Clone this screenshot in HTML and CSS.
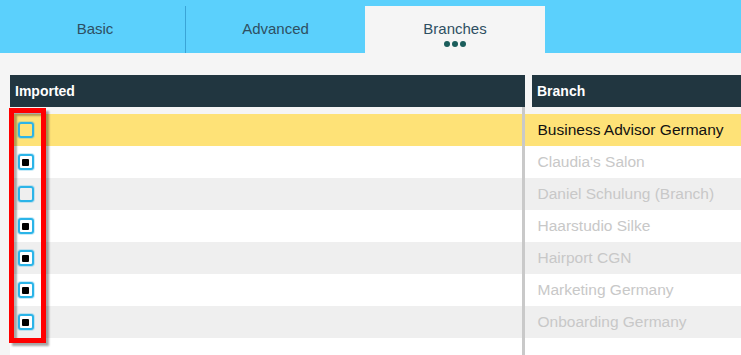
FILE: index.html
```html
<!DOCTYPE html>
<html lang="en">
<head>
    <meta charset="UTF-8">
    <title>Branches</title>
    <link rel="stylesheet" href="styles.css">
</head>
<body>
    <div class="tabs">
        <div class="tab">Basic</div>
        <div class="tab tab-sep">Advanced</div>
        <div class="tab active">
            Branches
            <div class="dots"><span></span><span></span><span></span></div>
        </div>
    </div>

    <div class="tables">
        <div class="heads">
            <div class="head head-left">Imported</div>
            <div class="head head-right">Branch</div>
        </div>
        <div class="body">
            <div class="col col-left">
                <div class="row selected"><span class="check"></span></div>
                <div class="row"><span class="check on"></span></div>
                <div class="row"><span class="check"></span></div>
                <div class="row"><span class="check on"></span></div>
                <div class="row"><span class="check on"></span></div>
                <div class="row"><span class="check on"></span></div>
                <div class="row"><span class="check on"></span></div>
                <div class="row tail"></div>
            </div>
            <div class="col col-right">
                <div class="row selected">Business Advisor Germany</div>
                <div class="row">Claudia's Salon</div>
                <div class="row">Daniel Schulung (Branch)</div>
                <div class="row">Haarstudio Silke</div>
                <div class="row">Hairport CGN</div>
                <div class="row">Marketing Germany</div>
                <div class="row">Onboarding Germany</div>
                <div class="row tail"></div>
            </div>
        </div>
        <!-- annotation frame round the checkboxes -->
        <div class="marker"></div>
    </div>
</body>
</html>
```

FILE: styles.css
```css
body {
    margin: 0;
    background-color: #f5f5f5;
    font-family: "Liberation Sans", Arial, sans-serif;
}
.tabs {
    display: flex;
    height: 53px;
    padding: 6px 0 0 5px;
    box-sizing: border-box;
    background-color: #5bd0fc;
}
.tab {
    width: 180px;
    padding-top: 14px;
    box-sizing: border-box;
    text-align: center;
    font-size: 15px;
    line-height: 18px;
    color: #2e4f62;
}
.tab-sep {
    border-left: 1px solid #3aa4d6;
    width: 180px;
}
.tab.active {
    background-color: #f5f5f5;
}
.dots {
    display: flex;
    justify-content: center;
    gap: 2.3px;
    margin-top: 3px;
}
.dots span {
    width: 6px;
    height: 6px;
    border-radius: 50%;
    background-color: #1b5d5b;
}
.tables {
    position: relative;
    padding: 22px 0 0 10px;
}
.heads {
    display: flex;
}
.head {
    height: 32px;
    line-height: 32px;
    padding-left: 5px;
    box-sizing: border-box;
    background-color: #213640;
    color: #fff;
    font-weight: bold;
    font-size: 14px;
}
.head-left {
    width: 515px;
}
.head-right {
    flex: 1;
    margin-left: 7px;
}
.body {
    display: flex;
}
.col {
    padding-top: 7px;
}
.col-left {
    width: 512px;
    border-right: 3px solid #c9c9c9;
}
.col-right {
    flex: 1;
}
.row {
    height: 32px;
    display: flex;
    align-items: center;
    background-color: #fff;
}
.row:nth-child(odd) {
    background-color: #efefef;
}
.row.selected {
    background-color: #fee277;
}
.row.tail {
    height: 17px;
}
.col-left .row {
    padding-left: 7.5px;
}
.col-right .row {
    padding-left: 12.5px;
    font-size: 15.5px;
    color: #c8c8c8;
}
.col-right .row.selected {
    color: #111;
}
.check {
    width: 16px;
    height: 16px;
    box-sizing: border-box;
    border: 2px solid #2bb4e8;
    border-radius: 3px;
    box-shadow: 0 0 0 1px rgba(43, 180, 232, 0.25);
    display: flex;
    align-items: center;
    justify-content: center;
}
.check.on {
    background-color: #fff;
}
.check.on::after {
    content: "";
    width: 7px;
    height: 7px;
    border-radius: 1px;
    background-color: #000;
}
.marker {
    position: absolute;
    left: 9px;
    top: 55px;
    width: 37px;
    height: 235px;
    box-sizing: border-box;
    border: 5px solid #ff0000;
    box-shadow: 3px 3px 2px rgba(0, 0, 0, 0.35), inset 3px 3px 2px rgba(0, 0, 0, 0.3);
}
```
